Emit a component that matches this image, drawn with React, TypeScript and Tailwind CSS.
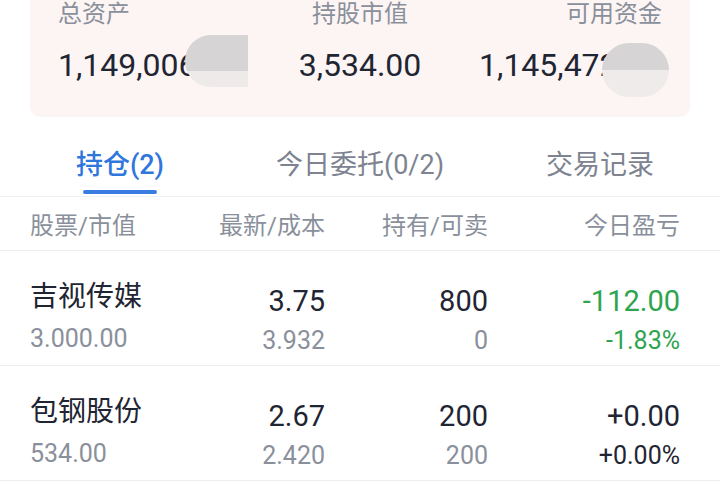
import React from "react";

const FONT = "font-['Roboto','Noto_Sans_CJK_SC',sans-serif]";

type Row = {
  name: string;
  mv: string;
  last: string;
  cost: string;
  hold: string;
  avail: string;
  pl: string;
  plPct: string;
  color: string;
};

const rows: Row[] = [
  { name: "吉视传媒", mv: "3.000.00", last: "3.75", cost: "3.932", hold: "800", avail: "0", pl: "-112.00", plPct: "-1.83%", color: "text-[#2ea44f]" },
  { name: "包钢股份", mv: "534.00", last: "2.67", cost: "2.420", hold: "200", avail: "200", pl: "+0.00", plPct: "+0.00%", color: "text-[#1f2532]" },
];

export default function App() {
  return (
    <div className={`w-[720px] h-[496px] bg-white overflow-hidden ${FONT}`}>
      {/* summary card */}
      <div className="mx-[30px] h-[117px] bg-[#fdf5f4] rounded-b-[10px] px-[28px] flex justify-between">
        <div className="relative flex flex-col items-start">
          <div className="text-[24px] leading-[28px] text-[#8a909b]">总资产</div>
          <div className="mt-[19px] text-[32px] leading-[36px] text-[#1f2532]">1,149,006.00</div>
          <div className="absolute left-[127px] top-[35px] w-[63px] h-[52px] rounded-l-[26px] overflow-hidden flex flex-col">
            <div className="h-[36px] bg-[#d7d4d5]" />
            <div className="flex-1 bg-[#efeaea]" />
          </div>
        </div>
        <div className="flex flex-col items-center">
          <div className="text-[24px] leading-[28px] text-[#8a909b]">持股市值</div>
          <div className="mt-[19px] text-[32px] leading-[36px] text-[#1f2532]">3,534.00</div>
        </div>
        <div className="relative flex flex-col items-end">
          <div className="text-[24px] leading-[28px] text-[#8a909b]">可用资金</div>
          <div className="mt-[19px] text-[32px] leading-[36px] text-[#1f2532]">1,145,472.00</div>
          <div className="absolute right-[-7px] top-[43px] w-[67px] h-[54px] rounded-[27px] overflow-hidden flex flex-col">
            <div className="h-[27px] bg-[#d7d4d5]" />
            <div className="flex-1 bg-[#efebeb]" />
          </div>
        </div>
      </div>

      {/* tabs */}
      <div className="grid grid-cols-3 h-[80px] border-b border-[#eef0f2]">
        <div className="flex flex-col items-center">
          <div className="mt-[30px] text-[27px] leading-[36px] font-medium text-[#2f76dd]">持仓(2)</div>
          <div className="mt-[7px] w-[74px] h-[4px] rounded-full bg-[#3a7de2]" />
        </div>
        <div className="flex flex-col items-center">
          <div className="mt-[30px] text-[27px] leading-[36px] text-[#7d8390]">今日委托(0/2)</div>
        </div>
        <div className="flex flex-col items-center">
          <div className="mt-[30px] text-[27px] leading-[36px] text-[#7d8390]">交易记录</div>
        </div>
      </div>

      {/* header */}
      <div className="grid grid-cols-[170px_125px_163px_192px] pl-[30px] pt-[4px] h-[54px] items-center border-b border-[#eceef0] text-[24px] text-[#8a909b]">
        <div>股票/市值</div>
        <div className="text-right">最新/成本</div>
        <div className="text-right">持有/可卖</div>
        <div className="text-right">今日盈亏</div>
      </div>

      {rows.map((r) => (
        <div key={r.name} className="grid grid-cols-[170px_125px_163px_192px] pl-[30px] h-[115px] border-b border-[#eceef0]">
          <div className="flex flex-col pt-[28px]">
            <div className="text-[28px] leading-[36px] text-[#1f2532]">{r.name}</div>
            <div className="mt-[9px] text-[25px] leading-[30px] text-[#8a909b]">{r.mv}</div>
          </div>
          <div className="flex flex-col items-end pt-[33px]">
            <div className="text-[29px] leading-[34px] text-[#1f2532]">{r.last}</div>
            <div className="mt-[8px] text-[25px] leading-[30px] text-[#8a909b]">{r.cost}</div>
          </div>
          <div className="flex flex-col items-end pt-[33px]">
            <div className="text-[29px] leading-[34px] text-[#1f2532]">{r.hold}</div>
            <div className="mt-[8px] text-[25px] leading-[30px] text-[#8a909b]">{r.avail}</div>
          </div>
          <div className="flex flex-col items-end pt-[33px]">
            <div className={`text-[29px] leading-[34px] ${r.color}`}>{r.pl}</div>
            <div className={`mt-[8px] text-[25px] leading-[30px] ${r.color}`}>{r.plPct}</div>
          </div>
        </div>
      ))}
    </div>
  );
}
